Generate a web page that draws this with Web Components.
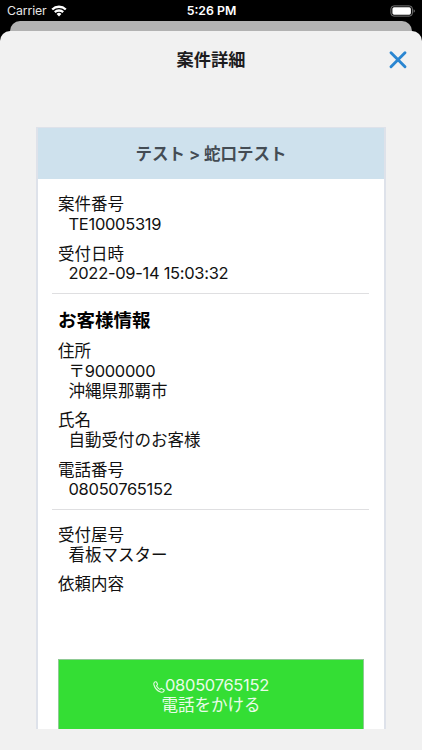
<!DOCTYPE html>
<html lang="ja">
<head>
<meta charset="utf-8">
<meta name="viewport" content="width=device-width, initial-scale=1">
<title>案件詳細</title>
<style>
  html, body {
    margin: 0;
    height: 100%;
    overflow: hidden;
    background: #000;
  }
  body {
    font-family: Inter, "Noto Sans CJK JP", sans-serif;
    font-size: 16.5px;
    color: #111;
  }
</style>
</head>
<body>
<case-screen>
  <status-bar slot="status" carrier="Carrier" time="5:26 PM"></status-bar>
  <sheet-header slot="header">案件詳細</sheet-header>
  <case-card>
    <span slot="title">テスト &gt; 蛇口テスト</span>
    <case-section>
      <case-field label="案件番号"><field-line latin>TE10005319</field-line></case-field>
      <case-field label="受付日時"><field-line latin>2022-09-14 15:03:32</field-line></case-field>
    </case-section>
    <case-section heading="お客様情報">
      <case-field label="住所">
        <field-line latin>〒9000000</field-line>
        <field-line>沖縄県那覇市</field-line>
      </case-field>
      <case-field label="氏名"><field-line>自動受付のお客様</field-line></case-field>
      <case-field label="電話番号"><field-line latin>08050765152</field-line></case-field>
    </case-section>
    <case-section>
      <case-field label="受付屋号"><field-line>看板マスター</field-line></case-field>
      <case-field label="依頼内容"></case-field>
    </case-section>
    <call-button slot="action" number="08050765152">電話をかける</call-button>
  </case-card>
</case-screen>

<script>
/** Base class: clones a template built from the static markup. */
class BaseElement extends HTMLElement {
  constructor() {
    super();
    const template = document.createElement('template');
    template.innerHTML = this.constructor.markup;
    this.attachShadow({ mode: 'open' });
    this.shadowRoot.appendChild(template.content.cloneNode(true));
  }

  _setText(selector, name) {
    this.shadowRoot.querySelector(selector).textContent = this.getAttribute(name) || '';
  }
}

/** Full screen: status bar, the sheet behind and the modal sheet. */
class CaseScreen extends BaseElement {
  static markup = `
    <style>
      :host {
        display: flex;
        flex-direction: column;
        height: 100vh;
        background: #000;
      }
      .behind {
        flex: none;
        height: 10px;
        margin: 0 10px;
        border-radius: 10px 10px 0 0;
        background: #b2b2b2;
      }
      .sheet {
        flex: 1;
        min-height: 0;
        display: flex;
        flex-direction: column;
        border-radius: 10px 10px 0 0;
        background: #f1f1f1;
      }
      .viewport {
        flex: 1;
        min-height: 0;
        margin: 39px 36px 21px;
        overflow: hidden;
      }
    </style>
    <slot name="status"></slot>
    <div class="behind"></div>
    <div class="sheet">
      <slot name="header"></slot>
      <div class="viewport"><slot></slot></div>
    </div>
  `;
}

class StatusBar extends BaseElement {
  static markup = `
    <style>
      :host {
        flex: none;
        display: grid;
        grid-template-columns: 1fr auto 1fr;
        align-items: center;
        height: 21px;
        padding: 0 6px 0 7px;
        color: #fff;
        font-size: 12.3px;
        line-height: 21px;
      }
      .left {
        display: flex;
        align-items: center;
        gap: 4px;
      }
      .carrier { color: #e6e6e6; letter-spacing: -0.1px; }
      .time { font-weight: 600; }
      .battery { justify-self: end; }
      svg { display: block; }
    </style>
    <div class="left">
      <span class="carrier"></span>
      <svg width="16" height="12" viewBox="0 0 16 12" fill="none" stroke="#fff" stroke-width="2.3">
        <path d="M1.2 4.5a9.8 9.8 0 0 1 13.6 0"/>
        <path d="M3.8 7.2a6.1 6.1 0 0 1 8.4 0"/>
        <path d="M8 11.4 5.6 9a3.5 3.5 0 0 1 4.8 0z" fill="#fff" stroke="none"/>
      </svg>
    </div>
    <span class="time"></span>
    <svg class="battery" width="26" height="12" viewBox="0 0 26 12">
      <rect x="0.9" y="0.9" width="21.5" height="10.2" rx="3" fill="none" stroke="#777"/>
      <rect x="2.4" y="2.3" width="18.5" height="7.4" rx="1.6" fill="#fff"/>
      <path d="M23.6 4.3q1.3 .5 1.3 1.7t-1.3 1.7z" fill="#777"/>
    </svg>
  `;

  connectedCallback() {
    this._setText('.carrier', 'carrier');
    this._setText('.time', 'time');
  }
}

class SheetHeader extends BaseElement {
  static markup = `
    <style>
      :host {
        flex: none;
        display: grid;
        grid-template-columns: 1fr auto 1fr;
        align-items: center;
        height: 57px;
        padding: 0 14px;
        font-size: 17.2px;
        font-weight: 700;
        color: #1c1c1e;
      }
      .title { grid-column: 2; line-height: 24px; }
      svg { display: block; justify-self: end; }
    </style>
    <span class="title"><slot></slot></span>
    <svg width="20" height="20" viewBox="0 0 20 20" stroke="#2a86d1" stroke-width="2.9" stroke-linecap="round">
      <path d="M3 2.800 17 16.800M17 2.800 3 16.800"/>
    </svg>
  `;
}

class CaseCard extends BaseElement {
  static markup = `
    <style>
      :host {
        display: flex;
        flex-direction: column;
        box-sizing: border-box;
        height: 660px;
        border: 2px solid #dee2ea;
        border-top-width: 1px;
        background: #fff;
      }
      header {
        flex: none;
        height: 51px;
        padding-top: 1px;
        box-sizing: border-box;
        background: #cee1ed;
        color: #444c54;
        font-weight: 700;
        text-align: center;
        line-height: 50px;
      }
      .body { padding: 5px 15px 0 14px; }
      .action { padding: 64px 20px 0; }
    </style>
    <header><slot name="title"></slot></header>
    <div class="body"><slot></slot></div>
    <div class="action"><slot name="action"></slot></div>
  `;
}

class CaseSection extends BaseElement {
  static markup = `
    <style>
      :host {
        display: block;
        padding: 11.4px 6px 0;
      }
      :host(:not(:last-of-type)) {
        padding-bottom: 8.6px;
        border-bottom: 1px solid #dfdfe1;
      }
      :host([heading]) { padding-top: 10px; }
      :host(:last-of-type) { padding-top: 16.2px; }
      h2 {
        margin: 4px 0 9.5px;
        font-size: 18.5px;
        font-weight: 700;
        line-height: 25px;
        color: #000;
      }
      h2:empty { display: none; }
      .fields {
        display: flex;
        flex-direction: column;
        gap: 10px;
      }
    </style>
    <h2></h2>
    <div class="fields"><slot></slot></div>
  `;

  connectedCallback() {
    this._setText('h2', 'heading');
  }
}

class CaseField extends BaseElement {
  static markup = `
    <style>
      :host { display: block; line-height: 19.7px; }
      .label { height: 19.7px; }
      .value { padding-left: 10.5px; }
    </style>
    <div class="label"></div>
    <div class="value"><slot></slot></div>
  `;

  connectedCallback() {
    this._setText('.label', 'label');
  }
}

class FieldLine extends BaseElement {
  static markup = `
    <style>
      :host { display: block; height: 19.7px; white-space: nowrap; }
      :host([latin]) { letter-spacing: -0.3px; }
    </style>
    <slot></slot>
  `;
}

class CallButton extends BaseElement {
  static markup = `
    <style>
      :host {
        display: block;
        box-sizing: border-box;
        height: 90px;
        padding-top: 16px;
        border: 1px solid #8fca94;
        background: #34de34;
        color: #e9fce9;
        text-align: center;
        line-height: 19.7px;
      }
      .number {
        display: flex;
        justify-content: center;
        align-items: center;
        height: 19.7px;
        letter-spacing: -0.3px;
      }
      svg { flex: none; margin-top: 2px; }
    </style>
    <div class="number">
      <svg width="12" height="12" viewBox="0 0 12 12" fill="none" stroke="#dffadf" stroke-width="1.1" stroke-linejoin="round">
        <path d="M2.4 .8C1.100 1.200.5 2.400 1 4c1 3.400 3.300 5.800 6.500 7 1.700.600 2.900 0 3.500-1 .300-.500.200-.900-.200-1.200L8.900 7.600c-.500-.300-.900-.200-1.200.200-.400.600-.700.700-1.300.300C5.200 7.300 4.400 6.300 3.800 5.200c-.300-.500-.200-.800.200-1.100.500-.300.600-.700.400-1.200L3.600 1.200c-.200-.400-.700-.600-1.200-.4Z"/>
      </svg>
      <span></span>
    </div>
    <slot></slot>
  `;

  connectedCallback() {
    this._setText('.number span', 'number');
  }
}

customElements.define('case-screen', CaseScreen);
customElements.define('status-bar', StatusBar);
customElements.define('sheet-header', SheetHeader);
customElements.define('case-card', CaseCard);
customElements.define('case-section', CaseSection);
customElements.define('case-field', CaseField);
customElements.define('field-line', FieldLine);
customElements.define('call-button', CallButton);
</script>
</body>
</html>
